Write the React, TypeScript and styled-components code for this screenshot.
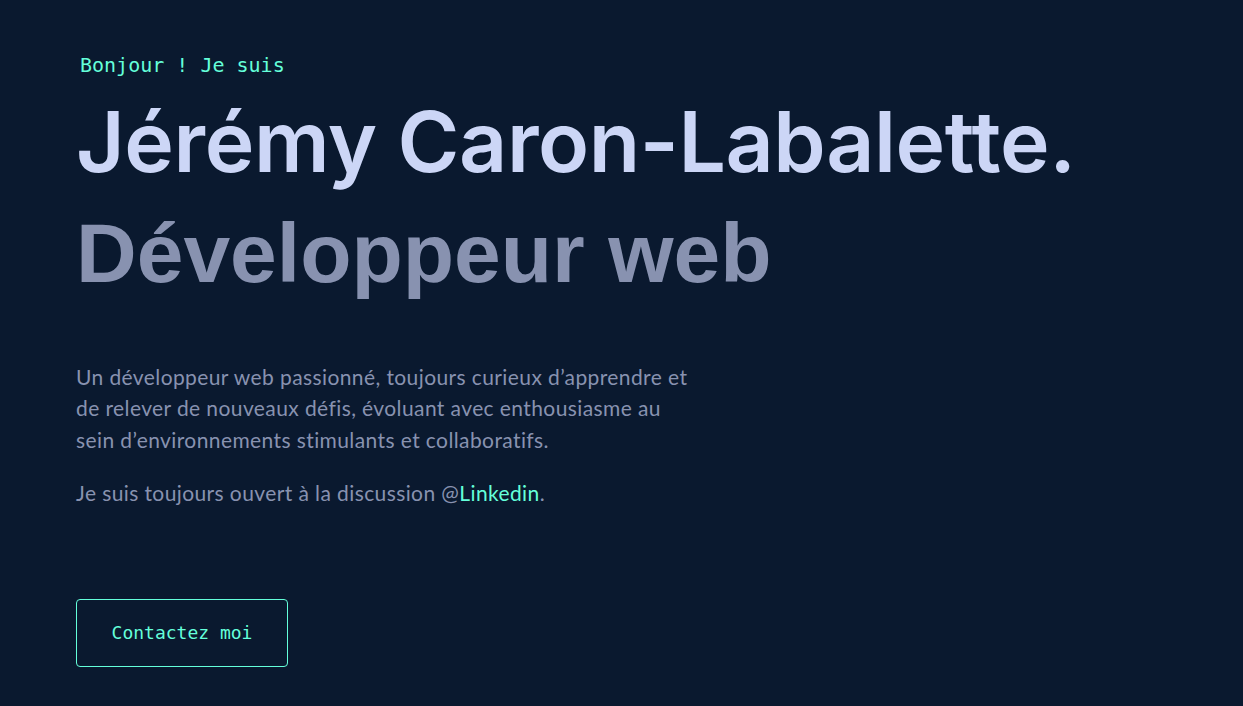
import styled, { createGlobalStyle } from "styled-components";

const GlobalStyle = createGlobalStyle`
  html, body {
    margin: 0;
    padding: 0;
    background-color: #0a192f;
  }
  body {
    font-family: "Lato", "Liberation Sans", sans-serif;
    -webkit-font-smoothing: antialiased;
  }
`;

const App: React.FC = () => {
  return (
    <>
      <GlobalStyle />
      <Hero>
        <Overline>Bonjour ! Je suis</Overline>
        <Name>Jérémy Caron-Labalette.</Name>
        <Role>Développeur web</Role>
        <Intro>
          <Paragraph>
            Un développeur web passionné, toujours curieux d’apprendre et de
            relever de nouveaux défis, évoluant avec enthousiasme au sein
            d’environnements stimulants et collaboratifs.
          </Paragraph>
          <Paragraph>
            Je suis toujours ouvert à la discussion @
            <GreenLink href="#">Linkedin</GreenLink>.
          </Paragraph>
        </Intro>
        <ContactButton href="#">Contactez moi</ContactButton>
      </Hero>
    </>
  );
};

const Hero = styled.section`
  display: flex;
  flex-direction: column;
  align-items: flex-start;
  box-sizing: border-box;
  min-height: 706px;
  padding: 55px 76px 0;
`;

const Overline = styled.h1`
  margin: 0 0 0 4px;
  color: #64ffda;
  font-family: "DejaVu Sans Mono", "Liberation Mono", monospace;
  font-size: 20px;
  font-weight: 400;
  line-height: 20px;
`;

const Name = styled.h2`
  margin: 21px 0 0;
  color: #ccd6f6;
  font-family: "Inter", "Liberation Sans", sans-serif;
  font-size: 84px;
  font-weight: 600;
  line-height: 1.1;
  letter-spacing: -0.4px;
`;

const Role = styled.h3`
  margin: 19px 0 0;
  color: #8892b0;
  font-family: "Liberation Sans", Arial, sans-serif;
  font-size: 84px;
  font-weight: 700;
  line-height: 1.1;
`;

const Intro = styled.div`
  max-width: 625px;
  margin-top: 61px;
`;

const Paragraph = styled.p`
  margin: 0 0 22px;
  color: #8892b0;
  font-size: 21px;
  line-height: 31.5px;
  letter-spacing: 0.4px;
`;

const GreenLink = styled.a`
  color: #64ffda;
  text-decoration: none;
`;

const ContactButton = styled.a`
  display: flex;
  align-items: center;
  justify-content: center;
  box-sizing: border-box;
  width: 212px;
  height: 68px;
  margin-top: 68px;
  border: 1px solid #64ffda;
  border-radius: 4px;
  color: #64ffda;
  font-family: "DejaVu Sans Mono", "Liberation Mono", monospace;
  font-size: 18px;
  text-decoration: none;
`;

export default App;
